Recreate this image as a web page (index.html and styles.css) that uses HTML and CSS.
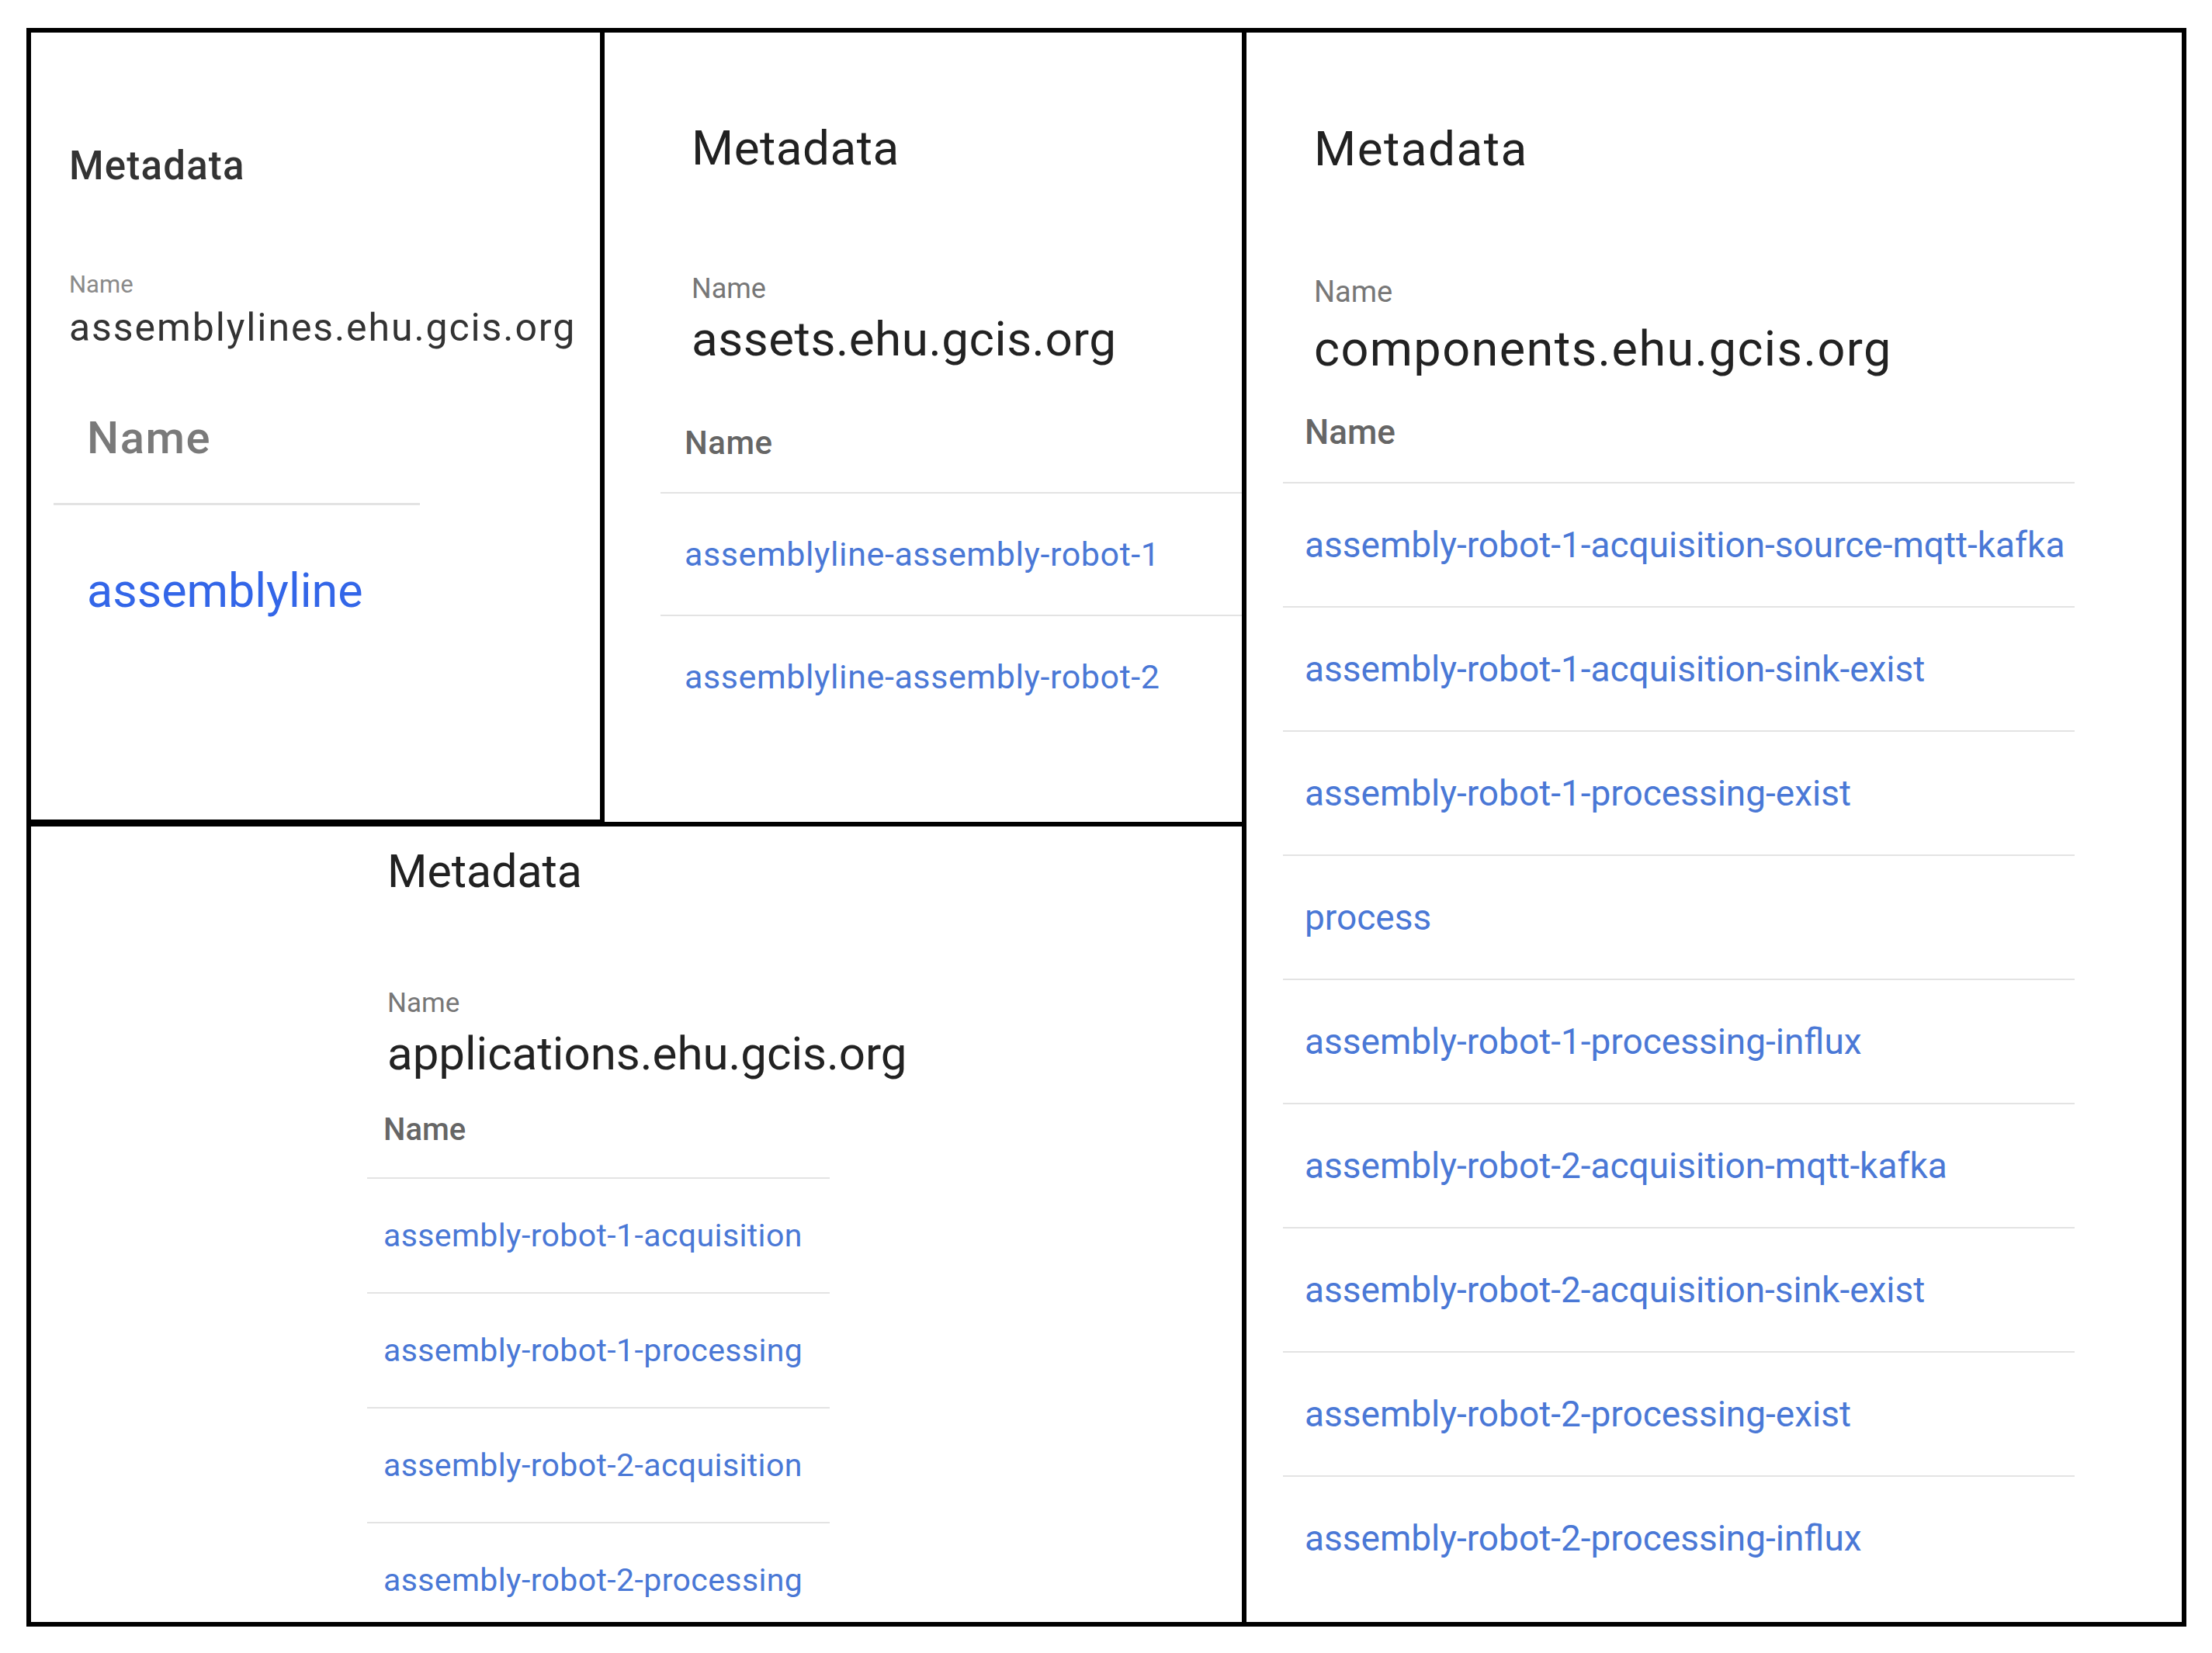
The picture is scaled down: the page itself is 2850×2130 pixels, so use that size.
FILE: index.html
```html
<!DOCTYPE html>
<html lang="en">
<head>
<meta charset="utf-8">
<title>Metadata collage</title>
<link rel="stylesheet" href="styles.css">
</head>
<body>
<div class="collage">
  <section class="panel p1">
    <div class="meta">
      <h2 class="title">Metadata</h2>
      <div class="label">Name</div>
      <div class="value">assemblylines.ehu.gcis.org</div>
    </div>
    <div class="table">
      <div class="th">Name</div>
      <div class="tr"><a class="link" href="#">assemblyline</a></div>
    </div>
  </section>

  <section class="panel p2">
    <div class="meta">
      <h2 class="title">Metadata</h2>
      <div class="label">Name</div>
      <div class="value">assets.ehu.gcis.org</div>
    </div>
    <div class="table">
      <div class="th">Name</div>
      <div class="tr"><a class="link" href="#">assemblyline-assembly-robot-1</a></div>
      <div class="tr"><a class="link" href="#">assemblyline-assembly-robot-2</a></div>
    </div>
  </section>

  <section class="panel p3">
    <div class="meta">
      <h2 class="title">Metadata</h2>
      <div class="label">Name</div>
      <div class="value">components.ehu.gcis.org</div>
    </div>
    <div class="table">
      <div class="th">Name</div>
      <div class="tr"><a class="link" href="#">assembly-robot-1-acquisition-source-mqtt-kafka</a></div>
      <div class="tr"><a class="link" href="#">assembly-robot-1-acquisition-sink-exist</a></div>
      <div class="tr"><a class="link" href="#">assembly-robot-1-processing-exist</a></div>
      <div class="tr"><a class="link" href="#">process</a></div>
      <div class="tr"><a class="link" href="#">assembly-robot-1-processing-influx</a></div>
      <div class="tr"><a class="link" href="#">assembly-robot-2-acquisition-mqtt-kafka</a></div>
      <div class="tr"><a class="link" href="#">assembly-robot-2-acquisition-sink-exist</a></div>
      <div class="tr"><a class="link" href="#">assembly-robot-2-processing-exist</a></div>
      <div class="tr"><a class="link" href="#">assembly-robot-2-processing-influx</a></div>
    </div>
  </section>

  <section class="panel p4">
    <div class="meta">
      <h2 class="title">Metadata</h2>
      <div class="label">Name</div>
      <div class="value">applications.ehu.gcis.org</div>
    </div>
    <div class="table">
      <div class="th">Name</div>
      <div class="tr"><a class="link" href="#">assembly-robot-1-acquisition</a></div>
      <div class="tr"><a class="link" href="#">assembly-robot-1-processing</a></div>
      <div class="tr"><a class="link" href="#">assembly-robot-2-acquisition</a></div>
      <div class="tr"><a class="link" href="#">assembly-robot-2-processing</a></div>
    </div>
  </section>
</div>
</body>
</html>
```

FILE: styles.css
```css
html, body {
  margin: 0;
  padding: 0;
  background: #ffffff;
}

body {
  font-family: Roboto, "Noto Sans", "Liberation Sans", sans-serif;
}

.collage {
  margin: 36px 0 0 34px;
  width: 2783px;
  height: 2060px;
  box-sizing: border-box;
  background: #000000;
  padding: 6px;
  display: grid;
  grid-template-columns: 733px 821px 1205px;
  grid-template-rows: 1017px 1025px;
  gap: 6px;
}

.panel {
  background: #ffffff;
  overflow: hidden;
  box-sizing: border-box;
  min-width: 0;
}

.title {
  margin: 0;
  font-weight: 400;
  color: #212121;
  white-space: nowrap;
}

.label {
  color: #777777;
  white-space: nowrap;
}

.value {
  color: #222222;
  white-space: nowrap;
}

.th {
  color: #666666;
  font-weight: 500;
  white-space: nowrap;
}

.tr {
  border-top: 2px solid #e3e3e3;
  white-space: nowrap;
}

.link {
  color: #4a78d6;
  text-decoration: none;
}

/* Panel 1: assemblylines */
.p1 {
  grid-column: 1;
  grid-row: 1;
  padding-top: 142px;
  border-bottom: 3px solid #000000;
}
.p1 .meta { padding-left: 49px; }
.p1 .title { font-size: 51px; line-height: 60px; font-weight: 500; color: #333333; letter-spacing: 1.2px; }
.p1 .label { font-size: 31px; line-height: 36px; margin-top: 105px; color: #8a8a8a; }
.p1 .value { font-size: 50px; line-height: 58px; margin-top: 8px; letter-spacing: 1.9px; color: #333333; }
.p1 .table { margin: 78px 0 0 29px; width: 472px; }
.p1 .th { font-size: 58px; line-height: 70px; padding: 0 0 49px 43px; color: #7a7a7a; letter-spacing: 1.5px; }
.p1 .tr { border-top-width: 3px; font-size: 61px; line-height: 220px; padding-left: 43px; }
.p1 .link { color: #3366e8; }

/* Panel 2: assets */
.p2 {
  grid-column: 2;
  grid-row: 1;
  padding-top: 113px;
}
.p2 .meta { padding-left: 112px; }
.p2 .title { font-size: 62px; line-height: 72px; letter-spacing: 0.5px; }
.p2 .label { font-size: 36px; line-height: 42px; margin-top: 124px; }
.p2 .value { font-size: 62px; line-height: 72px; margin-top: 8px; letter-spacing: 0.5px; }
.p2 .table { margin: 58px 0 0 72px; width: 749px; }
.p2 .th { font-size: 42px; line-height: 80px; padding: 0 0 23px 31px; letter-spacing: 0.5px; }
.p2 .tr { font-size: 43px; line-height: 156px; padding-left: 31px; letter-spacing: 0.6px; }

/* Panel 3: components */
.p3 {
  grid-column: 3;
  grid-row: 1 / 3;
  padding-top: 114px;
}
.p3 .meta { padding-left: 87px; }
.p3 .title { font-size: 62px; line-height: 72px; letter-spacing: 1.5px; }
.p3 .label { font-size: 38px; line-height: 44px; margin-top: 126px; }
.p3 .value { font-size: 63px; line-height: 72px; margin-top: 16px; letter-spacing: 1.4px; }
.p3 .table { margin: 31px 0 0 47px; width: 1020px; }
.p3 .th { font-size: 44px; line-height: 80px; padding: 0 0 24px 28px; }
.p3 .tr { font-size: 46px; line-height: 158px; padding-left: 28px; }

/* Panel 4: applications */
.p4 {
  grid-column: 1 / 3;
  grid-row: 2;
  padding-top: 23px;
}
.p4 .meta { padding-left: 459px; }
.p4 .title { font-size: 59px; line-height: 70px; }
.p4 .label { font-size: 35px; line-height: 40px; margin-top: 115px; }
.p4 .value { font-size: 60px; line-height: 70px; margin-top: 10px; }
.p4 .table { margin: 33px 0 0 433px; width: 596px; }
.p4 .th { font-size: 40px; line-height: 60px; padding: 0 0 31px 21px; }
.p4 .tr { font-size: 41px; line-height: 146px; padding-left: 21px; letter-spacing: 0.4px; }
```
